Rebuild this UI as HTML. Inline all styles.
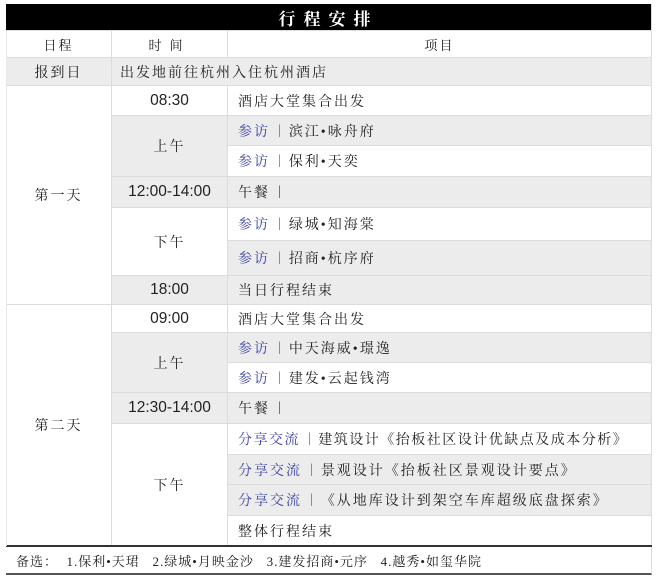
<!DOCTYPE html><html><head><meta charset="utf-8"><style>
body{margin:0;width:660px;height:585px;background:#fff;position:relative;overflow:hidden;font-family:"Liberation Serif","Noto Serif CJK SC",serif;color:#222}
.c{position:absolute;box-sizing:border-box;display:flex;align-items:center;font-size:14px;border-right:1px solid #dcdcdc;border-bottom:1px solid #dcdcdc;white-space:nowrap}
.m{justify-content:center;letter-spacing:2px}
.l{padding-left:10px;letter-spacing:2px}
.g{background:#ececec}
.t{font-family:"Liberation Sans","Noto Sans CJK SC",sans-serif;font-size:15.5px;letter-spacing:0}
.b{color:#3c44a8}
.p{color:#5a62b0;margin:0 6px 0 8px}
.d{color:#444;margin:0 6px 0 8px}
</style></head><body>
<div class="c m" style="left:6px;top:4px;width:646px;height:27px;background:#000;color:#fff;font-size:17px;letter-spacing:8px;font-weight:bold">行程安排</div>
<div class="c m" style="left:6px;top:31px;width:106px;height:27px;font-size:13px">日程</div>
<div class="c m" style="left:112px;top:31px;width:116px;height:27px;font-size:13px;letter-spacing:8px">时间</div>
<div class="c m" style="left:228px;top:31px;width:424px;height:27px;font-size:13px">项目</div>
<div class="c m g" style="left:6px;top:58px;width:106px;height:28px">报到日</div>
<div class="c l g" style="left:112px;top:58px;width:540px;height:28px;padding-left:8px">出发地前往杭州入住杭州酒店</div>
<div class="c m" style="left:6px;top:86px;width:106px;height:219px">第一天</div>
<div class="c m t" style="left:112px;top:86px;width:116px;height:30px">08:30</div>
<div class="c l" style="left:228px;top:86px;width:424px;height:30px">酒店大堂集合出发</div>
<div class="c m g" style="left:112px;top:116px;width:116px;height:61px">上午</div>
<div class="c l g" style="left:228px;top:116px;width:424px;height:30px"><span class="b">参访</span><span class="p">|</span>滨江•咏舟府</div>
<div class="c l" style="left:228px;top:146px;width:424px;height:31px"><span class="b">参访</span><span class="p">|</span>保利•天奕</div>
<div class="c m t g" style="left:112px;top:177px;width:116px;height:31px">12:00-14:00</div>
<div class="c l g" style="left:228px;top:177px;width:424px;height:31px">午餐<span class="d">|</span></div>
<div class="c m" style="left:112px;top:208px;width:116px;height:68px">下午</div>
<div class="c l" style="left:228px;top:208px;width:424px;height:33px"><span class="b">参访</span><span class="p">|</span>绿城•知海棠</div>
<div class="c l g" style="left:228px;top:241px;width:424px;height:35px"><span class="b">参访</span><span class="p">|</span>招商•杭序府</div>
<div class="c m t g" style="left:112px;top:276px;width:116px;height:29px">18:00</div>
<div class="c l g" style="left:228px;top:276px;width:424px;height:29px">当日行程结束</div>
<div class="c m" style="left:6px;top:305px;width:106px;height:241px">第二天</div>
<div class="c m t" style="left:112px;top:305px;width:116px;height:28px">09:00</div>
<div class="c l" style="left:228px;top:305px;width:424px;height:28px">酒店大堂集合出发</div>
<div class="c m g" style="left:112px;top:333px;width:116px;height:60px">上午</div>
<div class="c l g" style="left:228px;top:333px;width:424px;height:30px"><span class="b">参访</span><span class="p">|</span>中天海威•璟逸</div>
<div class="c l" style="left:228px;top:363px;width:424px;height:30px"><span class="b">参访</span><span class="p">|</span>建发•云起钱湾</div>
<div class="c m t g" style="left:112px;top:393px;width:116px;height:31px">12:30-14:00</div>
<div class="c l g" style="left:228px;top:393px;width:424px;height:31px">午餐<span class="d">|</span></div>
<div class="c m" style="left:112px;top:424px;width:116px;height:122px">下午</div>
<div class="c l" style="left:228px;top:424px;width:424px;height:31px;letter-spacing:1.5px"><span class="b">分享交流</span><span class="p">|</span>建筑设计《抬板社区设计优缺点及成本分析》</div>
<div class="c l g" style="left:228px;top:455px;width:424px;height:30px"><span class="b">分享交流</span><span class="p">|</span>景观设计《抬板社区景观设计要点》</div>
<div class="c l g" style="left:228px;top:485px;width:424px;height:31px"><span class="b">分享交流</span><span class="p">|</span>《从地库设计到架空车库超级底盘探索》</div>
<div class="c l" style="left:228px;top:516px;width:424px;height:30px">整体行程结束</div>
<div style="position:absolute;left:6px;top:545px;width:646px;height:2px;background:#333"></div>
<div class="c" style="left:6px;top:547px;width:646px;height:28px;font-size:13px;padding-left:10px;letter-spacing:1px;border-bottom:2px solid #555">备选：&nbsp;&nbsp;1.保利•天珺&nbsp;&nbsp;&nbsp;2.绿城•月映金沙&nbsp;&nbsp;&nbsp;3.建发招商•元序&nbsp;&nbsp;&nbsp;4.越秀•如玺华院</div>
<div style="position:absolute;left:6px;top:31px;width:1px;height:515px;background:#e8e8e8"></div>
</body></html>
